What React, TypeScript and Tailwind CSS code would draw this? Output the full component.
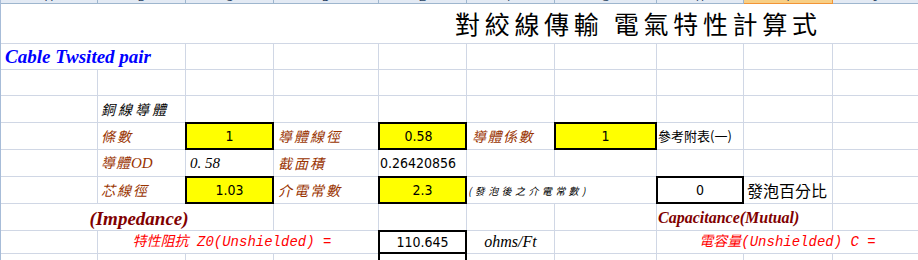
import React from "react";

const G = "border-r border-b border-[#d0d7e5]";
const HDR = "border-r border-b border-[#9eb6ce] bg-[#e3eaf4] flex items-end justify-center overflow-hidden";
const CJK = "font-['Noto_Sans_CJK_TC','Noto_Sans',sans-serif]";
const NUM = "font-['DejaVu_Sans',sans-serif] [font-stretch:condensed] text-[14px] text-black";
const SERIF = "font-['Liberation_Serif','Noto_Sans_CJK_TC',serif]";
const MONO = "font-['Liberation_Mono','Noto_Sans_CJK_TC',monospace]";
const BOX = "border-2 border-black -ml-px -mt-px flex items-center justify-center";

function Cell({ className = "", children }: { className?: string; children?: React.ReactNode }) {
  return <div className={`${G} flex items-center whitespace-nowrap ${className}`}>{children}</div>;
}

export default function App() {
  const letters = ["A", "B", "C", "D", "E", "F", "G", "H", "I", "J"];
  return (
    <div className="w-[918px] h-[260px] overflow-hidden bg-white">
      <div className="flex">
        <div className="w-px shrink-0 bg-[#a7bcd8] h-[280px]" />
        <div className="grid shrink-0 grid-cols-[97px_88px_88px_105px_88px_88px_102px_87px_89px_86px] grid-rows-[4px_40px_26px_26px_27px_27px_27px_27px_27px_23px_26px]">
          {/* header */}
          {letters.map((l) => (
            <div
              key={l}
              className={
                l === "I"
                  ? "border-r border-b border-[#f29436] bg-[#f8cf85] flex items-end justify-center overflow-hidden"
                  : HDR
              }
            >
              <span className="font-['Liberation_Sans',sans-serif] text-[11px] leading-[11px] text-[#27415f]">{l}</span>
            </div>
          ))}

          {/* row 1: title */}
          <div className="col-span-10 border-b border-[#d0d7e5] flex items-center pl-[454px] pb-[1px]">
            <span className={`${CJK} text-[25px] leading-none tracking-[4.7px] text-black whitespace-nowrap`}>
              對絞線傳輸 電氣特性計算式
            </span>
          </div>

          {/* row 2 */}
          <Cell className="col-span-2 pl-[4px] pt-[3px] items-start">
            <span className={`${SERIF} italic font-bold text-[19px] leading-none text-[#0000ff]`}>Cable Twsited pair</span>
          </Cell>
          <Cell />
          <Cell />
          <Cell />
          <Cell />
          <Cell />
          <Cell />
          <Cell />
          <Cell />

          {/* row 3 */}
          {letters.map((l) => (
            <Cell key={"r3" + l} />
          ))}

          {/* row 4 */}
          <Cell />
          <Cell className="pl-[3px]">
            <span className={`${CJK} italic text-[14px] tracking-[3px] text-black`}>銅線導體</span>
          </Cell>
          <Cell />
          <Cell />
          <Cell />
          <Cell />
          <Cell />
          <Cell />
          <Cell />
          <Cell />

          {/* row 5 */}
          <Cell />
          <Cell className="pl-[3px]">
            <span className={`${CJK} italic text-[14px] tracking-[2px] text-[#993300]`}>條數</span>
          </Cell>
          <div className={`${BOX} bg-[#ffff00]`}>
            <span className={NUM}>1</span>
          </div>
          <Cell className="pl-[4px]">
            <span className={`${CJK} italic text-[14px] tracking-[2px] text-[#993300]`}>導體線徑</span>
          </Cell>
          <div className={`${BOX} bg-[#ffff00] pr-[8px]`}>
            <span className={NUM}>0.58</span>
          </div>
          <Cell className="pl-[5px]">
            <span className={`${CJK} italic text-[14px] tracking-[1.5px] text-[#993300]`}>導體係數</span>
          </Cell>
          <div className={`${BOX} bg-[#ffff00]`}>
            <span className={NUM}>1</span>
          </div>
          <Cell className="pl-[1px]">
            <span className={`${CJK} text-[13px] text-black`}>參考附表(一)</span>
          </Cell>
          <Cell />
          <Cell />

          {/* row 6 */}
          <Cell />
          <Cell className="pl-[3px]">
            <span className={`${CJK} italic text-[14px] tracking-[1px] text-[#993300]`}>
              導體<span className={`${SERIF} text-[15px] tracking-normal`}>OD</span>
            </span>
          </Cell>
          <Cell className="pl-[4px]">
            <span className={`${SERIF} italic text-[15px] text-black`}>0. 58</span>
          </Cell>
          <Cell className="pl-[4px]">
            <span className={`${CJK} italic text-[14px] tracking-[2px] text-[#993300]`}>截面積</span>
          </Cell>
          <Cell className="pl-[1px]">
            <span className={NUM}>0.26420856</span>
          </Cell>
          <Cell />
          <Cell />
          <Cell />
          <Cell />
          <Cell />

          {/* row 7 */}
          <Cell />
          <Cell className="pl-[3px]">
            <span className={`${CJK} italic text-[14px] tracking-[2px] text-[#993300]`}>芯線徑</span>
          </Cell>
          <div className={`${BOX} bg-[#ffff00]`}>
            <span className={NUM}>1.03</span>
          </div>
          <Cell className="pl-[4px]">
            <span className={`${CJK} italic text-[14px] tracking-[2px] text-[#993300]`}>介電常數</span>
          </Cell>
          <div className={`${BOX} bg-[#ffff00]`}>
            <span className={NUM}>2.3</span>
          </div>
          <Cell className="col-span-2 pl-[1px]">
            <span className={`${CJK} italic text-[10px] tracking-[3.4px] text-black`}>(發泡後之介電常數)</span>
          </Cell>
          <div className={`${BOX} bg-white`}>
            <span className={NUM}>0</span>
          </div>
          <Cell className="pl-[3px]">
            <span className={`${CJK} text-[16px] text-black`}>發泡百分比</span>
          </Cell>
          <Cell />

          {/* row 8 */}
          <Cell className="col-span-3 justify-center pl-[4px] items-start pt-[5px]">
            <span className={`${SERIF} italic font-bold text-[19px] leading-none text-[#800000]`}>(Impedance)</span>
          </Cell>
          <Cell />
          <Cell />
          <Cell />
          <Cell />
          <Cell className="col-span-2 pl-[1px] items-start pt-[6px]">
            <span className={`${SERIF} italic font-bold text-[16px] leading-none text-[#800000]`}>Capacitance(Mutual)</span>
          </Cell>
          <Cell />

          {/* row 9 */}
          <Cell />
          <Cell className="col-span-3 justify-center pr-[12px]">
            <span className={`${MONO} italic text-[14px] text-[#ff0000]`}>特性阻抗 Z0(Unshielded) =</span>
          </Cell>
          <div className={`${BOX} bg-white`}>
            <span className={NUM}>110.645</span>
          </div>
          <Cell className="justify-center">
            <span className={`${SERIF} italic text-[16px] text-black`}>ohms/Ft</span>
          </Cell>
          <Cell />
          <Cell className="col-span-3 justify-center">
            <span className={`${MONO} italic text-[14px] text-[#ff0000]`}>電容量(Unshielded) C =</span>
          </Cell>

          {/* row 10 */}
          <Cell />
          <Cell />
          <Cell />
          <Cell />
          <div className="border-2 border-black -ml-px -mt-[2px] bg-white" />
          <Cell />
          <Cell />
          <Cell />
          <Cell />
          <Cell />
        </div>
      </div>
    </div>
  );
}
